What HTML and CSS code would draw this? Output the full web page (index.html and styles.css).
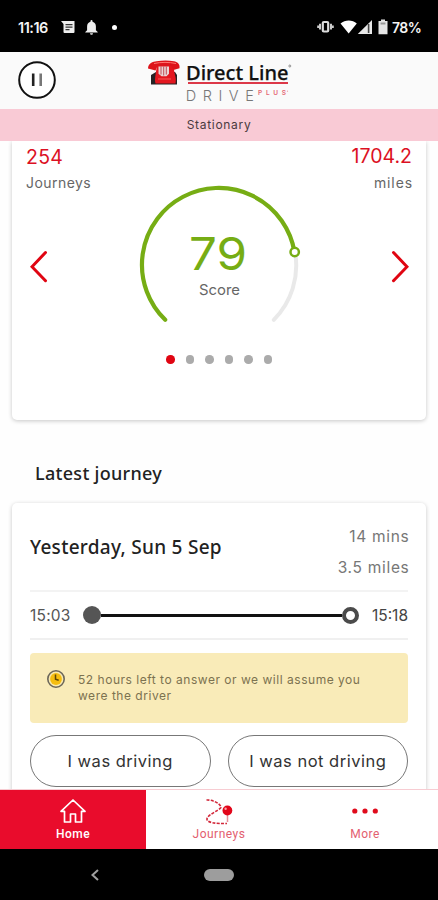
FILE: index.html
```html
<!DOCTYPE html>
<html lang="en">
<head>
<meta charset="utf-8">
<meta name="viewport" content="width=device-width">
<title>Direct Line DrivePlus</title>
<link rel="stylesheet" href="styles.css">
</head>
<body>
<div class="status">
  <span class="clock">11:16</span>
  <svg class="note" width="14" height="13" viewBox="0 0 14 13"><path fill="#eee" d="M0 0h13.500v11a1 1 0 0 1-1 1H3.500a1 1 0 0 1-1-1V3z"/><path stroke="#333" stroke-width="1.300" d="M4.500 3.700h7M4.500 6.200h7M4.500 8.700h4"/></svg>
  <svg class="bell" width="13" height="15" viewBox="0 0 13 15"><path fill="#eee" d="M6.500 0a1 1 0 0 1 1 1v.8c2.300.6 3.400 2.400 3.400 4.700v3.800l1.800 1.700v.6H.3V12l1.800-1.700V6.500c0-2.300 1.100-4.100 3.400-4.700V1a1 1 0 0 1 1-1zM5 13.200h3a1.500 1.500 0 0 1-3 0z"/></svg>
  <span class="pip"></span>
  <svg class="signals" width="72" height="16" viewBox="0 0 72 16">
    <rect x="5.800" y="3" width="5.400" height="9.500" rx="1" fill="none" stroke="#ddd" stroke-width="2.200"/>
    <path d="M3 4.800v5.800M1.200 6.500v2.400M14 4.800v5.800M15.800 6.500v2.400" stroke="#ccc" stroke-width="2"/>
    <path fill="#fff" d="M23.500 4.500c4.600-4 12-4 16.300 0L31.700 14.500z"/>
    <path fill="#e8e8e8" d="M55 1v14H40.800z"/><path stroke="#444" stroke-width="1.600" d="M51.600 5v9"/>
    <path fill="#e5e5e5" d="M61.500 2H64V.5h4V2h2.500v13.200h-9z"/><path fill="#999" d="M63.500 3.500h5v2h-5z"/>
  </svg>
  <span class="battery">78%</span>
</div>

<header class="header">
  <svg class="pause" width="38" height="38" viewBox="0 0 38 38"><circle cx="19" cy="19" r="17.800" fill="#fff" stroke="#111" stroke-width="2"/><path d="M15.200 12.500v12.500" stroke="#222" stroke-width="2.600"/><path d="M22.700 12.500v12.500" stroke="#777" stroke-width="2.600"/></svg>
  <svg class="logo" width="146" height="50" viewBox="0 -6 146 50">
    <path fill="#262224" d="M4 16l5-3h19l2 3v9.500H4z"/>
    <path fill="#e3171f" d="M10 6h16l2 10c1 3 1 5.500.5 8.500h-20c-.8-3-.5-5 0-8.500z"/>
    <path fill="#dd141b" d="M1 9.500C1 4 6 2.800 9.500 2.200c6-.8 12-.8 17.500 0 3 .5 6.200 2.500 5.500 7l-6 1.800-2.200-4H10.500L8.500 11.500z"/>
    <path d="M7 4.500c7-1.500 15-1.500 22 0" fill="none" stroke="#ff7771" stroke-width="1"/>
    <path fill="#ead5d5" d="M11.500 7.500h10.500v7.200l-2.500 2.500h-5l-3-2.500z"/>
    <path d="M14 7.500v8M16.700 7.500v9M19.300 7.500v8" stroke="#bd4249" stroke-width=".9"/>
    <path d="M11 20h13" stroke="#fa5b58" stroke-width="1"/>
    <text class="brand" x="39" y="20.500" textLength="102.500" lengthAdjust="spacingAndGlyphs">Direct Line</text>
    <circle cx="142.800" cy="7" r="1" fill="none" stroke="#777" stroke-width=".8"/>
    <path stroke="#dc3848" stroke-width="2" d="M41 24h100"/>
    <text class="drive" x="38.800" y="41.700" textLength="68">DRIVE</text>
    <text class="plus" x="111" y="36.200" textLength="28">PLUS</text>
    <circle cx="140.500" cy="32.200" r=".6" fill="#ef9ba3"/>
  </svg>
</header>

<div class="banner"><span>Stationary</span></div>

<main class="main">
  <section class="card score">
    <div class="side">
      <div class="figure">254</div>
      <div class="unit">Journeys</div>
      <svg class="arrow" width="18" height="34" viewBox="0 0 18 34"><path d="M15.500 2.500L2 16.700l13.500 14" /></svg>
    </div>
    <svg class="gauge" width="170" height="150" viewBox="0 0 170 150">
      <path d="M161 71A76.800 76.800 0 0 1 139.800 138.800" fill="none" stroke="#e9e9e9" stroke-width="4" stroke-linecap="round"/>
      <path d="M31.200 138.800A76.800 76.800 0 1 1 160.500 71" fill="none" stroke="#76ad14" stroke-width="4.200" stroke-linecap="round"/>
      <circle cx="160.700" cy="71" r="4.200" fill="#fff" stroke="#76ad14" stroke-width="2.500"/>
      <text class="value" x="55" y="88.500" textLength="58" lengthAdjust="spacingAndGlyphs">79</text>
      <text class="label" x="65" y="114" textLength="41" lengthAdjust="spacingAndGlyphs">Score</text>
    </svg>
    <div class="side right">
      <div class="figure total">1704.2</div>
      <div class="unit">miles</div>
      <svg class="arrow" width="18" height="34" viewBox="0 0 18 34"><path d="M2.500 2.500L16 16.700l-13.500 14" /></svg>
    </div>
    <div class="dots"><i class="on"></i><i></i><i></i><i></i><i></i><i></i></div>
  </section>

  <h2 class="heading">Latest journey</h2>

  <section class="card journey">
    <div class="summary">
      <h3>Yesterday, Sun 5 Sep</h3>
      <div class="totals"><div>14 mins</div><div>3.5 miles</div></div>
    </div>
    <div class="timeline">
      <span class="t-start">15:03</span>
      <span class="from"></span><span class="track"></span><span class="to"></span>
      <span class="t-end">15:18</span>
    </div>
    <div class="notice">
      <svg width="20" height="20" viewBox="0 0 20 20"><circle cx="10" cy="10" r="8.200" fill="#f8e9b0" stroke="#6c675a" stroke-width="1.600"/><circle cx="10" cy="10" r="5.900" fill="#f5bd10"/><path d="M9.500 5.500v4.700l3.200 1" fill="none" stroke="#5d4608" stroke-width="1.500"/></svg>
      <p>52 hours left to answer or we will assume you<br>were the driver</p>
    </div>
    <div class="answers">
      <button>I was driving</button>
      <button>I was not driving</button>
    </div>
  </section>
</main>

<nav class="tabs">
  <a class="tab active">
    <svg width="28" height="26" viewBox="0 0 28 26"><path d="M2 13.300L14 2l12 11.300h-3.500V24h-6v-8h-5v8h-6V13.300z" fill="none" stroke="#fff" stroke-width="1.700" stroke-linejoin="round"/></svg>
    <span>Home</span>
  </a>
  <a class="tab">
    <svg width="30" height="28" viewBox="0 0 30 28"><path d="M2.500 2c5-.5 14 3 14.500 7.500C14 13 5 16 3 20.500c-1 4 8 5.300 20 5" fill="none" stroke="#d22639" stroke-width="1.600" stroke-dasharray="3 1.300"/><path d="M23.500 16v8" stroke="#e78f98" stroke-width="1.500"/><circle cx="23.400" cy="12.500" r="4.900" fill="#e2061a"/><circle cx="21.600" cy="10.700" r="1.200" fill="#f9a6a9"/></svg>
    <span>Journeys</span>
  </a>
  <a class="tab">
    <svg width="28" height="26" viewBox="0 0 28 26"><g fill="#e00b1c"><circle cx="3.800" cy="13" r="2.600"/><circle cx="14" cy="13" r="2.600"/><circle cx="24.300" cy="13" r="2.600"/></g></svg>
    <span>More</span>
  </a>
</nav>

<div class="system">
  <svg width="10" height="14" viewBox="0 0 10 14"><path d="M8 2L2.500 7 8 12" fill="none" stroke="#a0a0a0" stroke-width="2"/></svg>
  <span class="pill"></span>
</div>
</body>
</html>
```
FILE: styles.css
```css
* { box-sizing: border-box; }
body {
  margin: 0;
  width: 438px;
  height: 900px;
  overflow: hidden;
  display: flex;
  flex-direction: column;
  background: #fefefe;
  font-family: Inter, "Noto Sans", sans-serif;
  color: #555;
}
svg { display: block; flex: none; }
span { white-space: nowrap; }

.status {
  height: 52px;
  flex: none;
  background: #000;
  color: #f4f4f4;
  display: flex;
  align-items: center;
  padding: 2px 0 0 18px;
}
.clock { width: 43px; font-weight: 600; font-size: 14.500px; letter-spacing: -0.5px; }
.bell { margin-left: 10px; }
.pip { width: 5px; height: 5px; border-radius: 50%; background: #fff; margin-left: 14px; }
.signals { margin-left: 200px; }
.battery { margin-left: 3px; font-weight: 600; font-size: 14px; letter-spacing: -0.6px; }

.header {
  height: 57px;
  flex: none;
  background: #fafafa;
  display: flex;
  padding: 1px 0 0 18px;
}
.pause { margin-top: 8px; }
.logo { margin-left: 91px; overflow: visible; }
.brand { font: 500 20.500px "Noto Sans", sans-serif; fill: #111; stroke: #111; stroke-width: 0.25px; }
.drive { font: 300 14.500px Inter, sans-serif; fill: #777; }
.plus { font: 600 6.500px Inter, sans-serif; fill: #e56774; }

.banner {
  height: 32px;
  flex: none;
  background: #f9cad5;
  color: #4a3a40;
  text-align: center;
  font-size: 12px;
  line-height: 32px;
  letter-spacing: 0.7px;
}

.main { height: 648px; flex: none; overflow: hidden; }
.card {
  margin: 0 12px;
  background: #fff;
  box-shadow: 0 1px 4px rgba(0, 0, 0, 0.22);
}
.score {
  height: 279px;
  border-radius: 0 0 5px 5px;
  display: grid;
  grid-template-columns: 1fr 170px 1fr;
  grid-template-rows: 190px auto;
  padding: 0 14px;
}
.side { padding-top: 4px; }
.right { padding-top: 3px; display: flex; flex-direction: column; align-items: flex-end; }
.figure { color: #dc1023; font-size: 19.500px; line-height: 24px; letter-spacing: 0.3px; }
.total { letter-spacing: 0; }
.unit { font-size: 14px; line-height: 20px; margin-top: 4px; color: #666; letter-spacing: 0.45px; }
.right .unit { margin-right: -1px; letter-spacing: 0.9px; margin-top: 5px; }
.arrow { margin: 57px 0 0 4px; }
.right .arrow { margin: 57px 3px 0 0; }
.arrow path { fill: none; stroke: #e00512; stroke-width: 3; stroke-linecap: round; }
.gauge { margin-top: 40px; }
.value { font: 400 45px Inter, sans-serif; fill: #76ad14; }
.label { font: 400 14.500px Inter, sans-serif; fill: #666; }
.dots {
  grid-column: 1 / 4;
  display: flex;
  justify-content: center;
  gap: 11px;
  padding-top: 24px;
}
.dots i { width: 8.500px; height: 8.500px; border-radius: 50%; background: #ababab; }
.dots .on { background: #e00512; }

.heading {
  margin: 0 0 0 35px;
  height: 83px;
  padding-top: 41px;
  font: 500 18px/24px "Noto Sans", sans-serif;
  letter-spacing: 0.3px;
  color: #222;
}

.journey { height: 320px; border-radius: 5px; padding: 0 18px; }
.summary {
  height: 89px;
  display: flex;
  justify-content: space-between;
  border-bottom: 2px solid #f3f3f3;
}
.summary h3 {
  margin: 31px 0 0;
  font: 500 19px/26px "Noto Sans", sans-serif;
  letter-spacing: 0.28px;
  color: #222;
}
.totals {
  font-size: 15.500px;
  line-height: 31px;
  padding-top: 18px;
  margin-right: -1.500px;
  text-align: right;
  letter-spacing: 0.7px;
  color: #777;
}
.timeline {
  height: 48px;
  display: flex;
  align-items: center;
  border-bottom: 2px solid #f0f0f0;
  font-size: 15.500px;
}
.t-start { width: 53px; letter-spacing: 0.2px; }
.from { width: 18px; height: 18px; border-radius: 50%; background: #555; }
.track { flex: 1; height: 3px; background: #111; }
.to { width: 17px; height: 17px; border-radius: 50%; border: 4px solid #4b4b4b; background: #fff; }
.t-end { width: 49px; text-align: right; color: #444; }
.notice {
  margin-top: 13px;
  height: 70px;
  border-radius: 4px;
  background: #f9ebb8;
  display: flex;
  padding: 16px 0 0 16px;
}
.notice p {
  margin: 3px 0 0 12px;
  font-size: 12px;
  line-height: 16px;
  letter-spacing: 0.52px;
  white-space: nowrap;
  color: #7c7250;
}
.answers { display: flex; gap: 17px; margin-top: 12px; }
.answers button {
  flex: 1;
  height: 52px;
  padding: 0;
  border: 1px solid #777;
  border-radius: 26px;
  background: #fff;
  font: 400 16.500px Inter, sans-serif;
  letter-spacing: 0.5px;
  color: #333;
}

.tabs {
  height: 60px;
  flex: none;
  display: flex;
  background: #fff;
  border-top: 1px solid #f7ccd2;
}
.tab {
  flex: 1;
  display: flex;
  flex-direction: column;
  align-items: center;
  padding-top: 8px;
  color: #e3606f;
  font: 400 12px/16px Roboto, sans-serif;
  letter-spacing: 0.5px;
}
.tab span { margin-top: auto; margin-bottom: 7px; }
.active { background: #e90c2c; color: #fff; font-weight: 500; }

.system { flex: 1; background: #000; display: flex; align-items: center; padding-left: 90px; }
.pill { width: 30px; height: 12px; border-radius: 6px; background: #9d9d9d; margin-left: 104px; }
```
